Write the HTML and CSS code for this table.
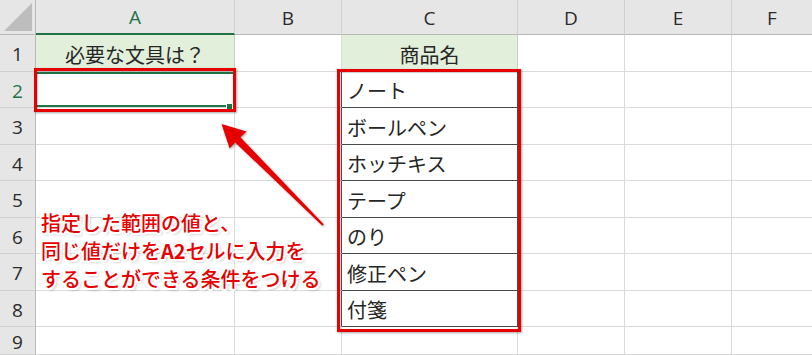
FILE: index.html
```html
<!DOCTYPE html>
<html lang="ja">
<head>
<meta charset="utf-8">
<title>Sheet</title>
<link rel="stylesheet" href="styles.css">
</head>
<body>
<div class="wrap">
  <div class="sheet">
    <div class="hd corner"><span class="tri"></span></div>
    <div class="hd col sel">A</div>
    <div class="hd col">B</div>
    <div class="hd col">C</div>
    <div class="hd col">D</div>
    <div class="hd col">E</div>
    <div class="hd col last">F</div>

    <div class="hd row">1</div>
    <div class="cell fill center">必要な文具は？</div>
    <div class="cell"></div>
    <div class="cell fill center c1">商品名</div>
    <div class="cell"></div>
    <div class="cell"></div>
    <div class="cell last"></div>

    <div class="hd row selrow">2</div>
    <div class="cell active"></div>
    <div class="cell tbl"></div>
    <div class="cell tc">ノート</div>
    <div class="cell"></div>
    <div class="cell"></div>
    <div class="cell last"></div>

    <div class="hd row">3</div>
    <div class="cell"></div>
    <div class="cell tbl"></div>
    <div class="cell tc">ボールペン</div>
    <div class="cell"></div>
    <div class="cell"></div>
    <div class="cell last"></div>

    <div class="hd row">4</div>
    <div class="cell"></div>
    <div class="cell tbl"></div>
    <div class="cell tc">ホッチキス</div>
    <div class="cell"></div>
    <div class="cell"></div>
    <div class="cell last"></div>

    <div class="hd row">5</div>
    <div class="cell"></div>
    <div class="cell tbl"></div>
    <div class="cell tc">テープ</div>
    <div class="cell"></div>
    <div class="cell"></div>
    <div class="cell last"></div>

    <div class="hd row">6</div>
    <div class="cell"></div>
    <div class="cell tbl"></div>
    <div class="cell tc">のり</div>
    <div class="cell"></div>
    <div class="cell"></div>
    <div class="cell last"></div>

    <div class="hd row">7</div>
    <div class="cell"></div>
    <div class="cell tbl"></div>
    <div class="cell tc">修正ペン</div>
    <div class="cell"></div>
    <div class="cell"></div>
    <div class="cell last"></div>

    <div class="hd row">8</div>
    <div class="cell"></div>
    <div class="cell tbl"></div>
    <div class="cell tc">付箋</div>
    <div class="cell"></div>
    <div class="cell"></div>
    <div class="cell last"></div>

    <div class="hd row">9</div>
    <div class="cell"></div>
    <div class="cell"></div>
    <div class="cell"></div>
    <div class="cell"></div>
    <div class="cell"></div>
    <div class="cell last"></div>
  </div>

  <div class="redbox box-a"></div>
  <div class="redbox box-c"></div>

  <svg class="arrow" width="812" height="355" viewBox="0 0 812 355">
    <polygon fill="#e60000" points="221.5,124 246.6,131.6 240.4,137.3 323.7,224.3 322.3,225.7 235.2,142.4 229.6,148.6"/>
  </svg>

  <div class="note">
    <p>指定した範囲の値と、</p>
    <p>同じ値だけを<b>A2</b>セルに入力を</p>
    <p>することができる条件をつける</p>
  </div>
</div>
</body>
</html>
```

FILE: styles.css
```css
* { box-sizing: border-box; }
html, body { margin: 0; padding: 0; background: #fff; }
body { width: 812px; height: 355px; overflow: hidden; }

.wrap { position: relative; width: 812px; height: 355px; overflow: hidden; }

.sheet {
  display: grid;
  grid-template-columns: 36px 199px 107px 176px 107px 107px 80px;
  grid-template-rows: 35px 37px 36px 37px 36px 37px 36px 37px 36px 28px;
  font-family: "Noto Sans CJK JP", "Noto Sans", sans-serif;
}

.hd {
  background: #e6e6e6;
  color: #2b2b2b;
  font-family: "Open Sans", "Noto Sans", sans-serif;
  font-size: 19px;
  display: flex;
  align-items: center;
  justify-content: center;
  border-right: 1px solid #d0d0d0;
  border-bottom: 1px solid #d0d0d0;
}
.hd.col { border-bottom: 1px solid #b8b8b8; padding-top: 1px; }
.hd.col.last { border-right: none; }
.hd.col.sel { color: #217346; border-bottom: 2px solid #217346; }
.hd.row { border-right: 1px solid #b8b8b8; padding-top: 2px; }
.hd.selrow { color: #217346; }

.corner { position: relative; border-right: 1px solid #b8b8b8; border-bottom: 1px solid #b8b8b8; }
.tri {
  position: absolute;
  right: 3px;
  bottom: 3px;
  width: 0;
  height: 0;
  border-left: 28px solid transparent;
  border-bottom: 28px solid #bdbdbd;
}

.cell {
  border-right: 1px solid #dadada;
  border-bottom: 1px solid #dadada;
  font-size: 20px;
  color: #262626;
  display: flex;
  align-items: center;
  padding: 2px 0 0 5px;
  white-space: nowrap;
}
.cell.last { border-right: none; }
.cell.center { justify-content: center; padding-left: 0; }
.cell.fill { background: #e2efda; border-right-color: #c6cfc0; }
.cell.c1 { border-bottom-color: #4a4a4a; }
.cell.tbl { border-right-color: #4a4a4a; }
.cell.tc { border-right-color: #4a4a4a; border-bottom-color: #4a4a4a; }

.cell.active {
  position: relative;
  box-shadow: inset 0 2px 0 #217346, inset 0 -2px 0 #217346;
}
.cell.active::after {
  content: "";
  position: absolute;
  right: 1px;
  bottom: -3px;
  width: 5px;
  height: 5px;
  background: #217346;
  border: 1px solid #fff;
}

.redbox {
  position: absolute;
  border: 3px solid #e60000;
  box-shadow: 1px 1px 2px rgba(0,0,0,0.35), inset 1px 1px 1px rgba(0,0,0,0.2);
}
.box-a { left: 34px; top: 68px; width: 202px; height: 44px; }
.box-c { left: 337px; top: 69px; width: 184px; height: 263px; }

.arrow {
  position: absolute;
  left: 0;
  top: 0;
  filter: drop-shadow(1px 1px 1px rgba(0,0,0,0.35));
}

.note {
  position: absolute;
  left: 41px;
  top: 209px;
  color: #e60000;
  font-family: "Noto Sans CJK JP", sans-serif;
  font-size: 20px;
  font-weight: 500;
  line-height: 28px;
  letter-spacing: 0;
  text-shadow:
    -2px 0 0 #fff, 2px 0 0 #fff, 0 -2px 0 #fff, 0 2px 0 #fff,
    -1.5px -1.5px 0 #fff, 1.5px -1.5px 0 #fff, -1.5px 1.5px 0 #fff, 1.5px 1.5px 0 #fff,
    2px 2px 3px rgba(0,0,0,0.35);
}
.note p { margin: 0; white-space: nowrap; }
.note b { font-weight: 700; }
```
